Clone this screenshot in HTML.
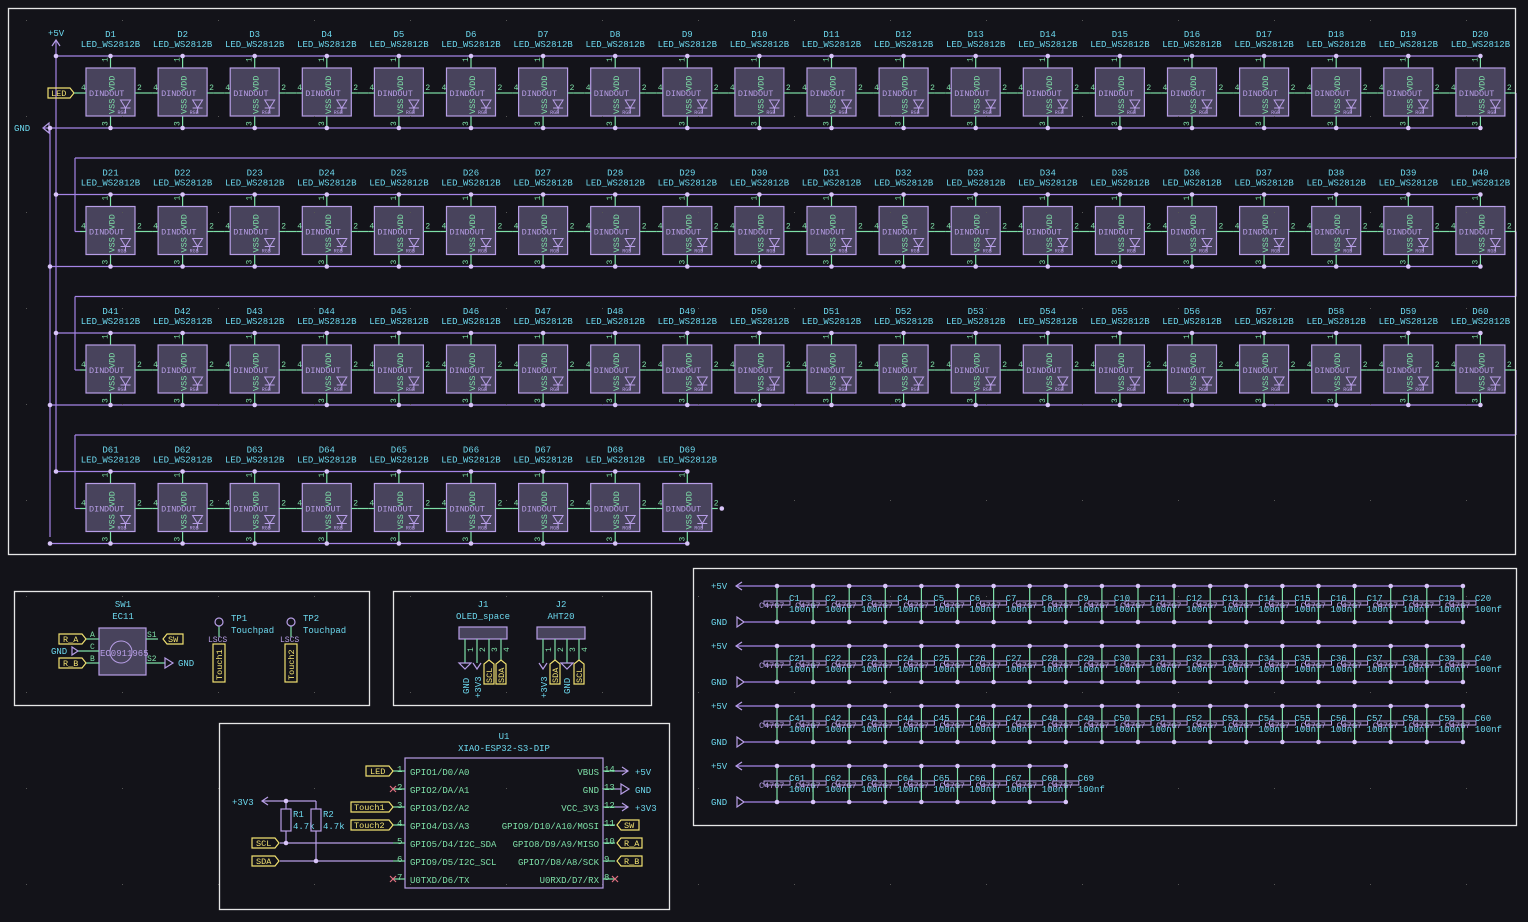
<!DOCTYPE html>
<html><head><meta charset="utf-8">
<style>
html,body{margin:0;padding:0;background:#131319;}
svg{display:block;}
text{font-family:"Liberation Mono",monospace;}
</style></head>
<body>
<svg id="s" width="1528" height="922" viewBox="0 0 1528 922" xmlns="http://www.w3.org/2000/svg">
<rect width="1528" height="922" fill="#131319"/>
<g id="g"></g>
<g fill="none" stroke="#e6e6e6" stroke-width="1.3">
<rect x="8.5" y="8.5" width="1507" height="546"/>
<rect x="14.5" y="591.5" width="355" height="114"/>
<rect x="393.5" y="591.5" width="258" height="114"/>
<rect x="219.5" y="723.5" width="450" height="186"/>
<rect x="693.5" y="568.5" width="823" height="257"/>
</g>
<!-- SW1 section -->
<g font-size="9" fill="#6cd8ee">
<text x="123" y="607" text-anchor="middle">SW1</text>
<text x="123" y="619" text-anchor="middle">EC11</text>
<text x="51" y="654">GND</text>
<text x="178" y="666">GND</text>
<text x="231" y="621">TP1</text>
<text x="231" y="633">Touchpad</text>
<text x="303" y="621">TP2</text>
<text x="303" y="633">Touchpad</text>
</g>
<rect x="99" y="628" width="47" height="47" fill="#48435c" stroke="#b79ee6" stroke-width="1.2"/>
<circle cx="121" cy="652" r="11" fill="none" stroke="#b79ee6"/>
<text x="100" y="656" font-size="9" fill="#b79ee6">EC0911965</text>
<g stroke="#7ee0a8" stroke-width="1.2">
<line x1="86" y1="639" x2="99" y2="639"/><line x1="78" y1="651" x2="99" y2="651"/><line x1="86" y1="663" x2="99" y2="663"/>
<line x1="146" y1="639" x2="158" y2="639"/><line x1="146" y1="663" x2="165" y2="663"/>
<line x1="219" y1="626" x2="219" y2="637"/><line x1="291" y1="626" x2="291" y2="637"/>
</g>
<g font-size="8" fill="#7ee0a8"><text x="90" y="637">A</text><text x="90" y="649">C</text><text x="90" y="661">B</text><text x="147" y="637">S1</text><text x="147" y="661">S2</text></g>
<g fill="none" stroke="#b79ee6" stroke-width="1.2">
<path d="M78 651 l-6 -4 v8 z"/><path d="M165 658 l8 5 -8 5 z"/>
<circle cx="219" cy="622" r="4"/><circle cx="291" cy="622" r="4"/>
</g>
<g font-size="8" fill="#b79ee6"><text x="208" y="642">LSCS</text><text x="280" y="642">LSCS</text></g>
<g fill="none" stroke="#f0e070" stroke-width="1.2">
<path d="M59 634 h23 l4 5 -4 5 h-23 z"/><path d="M59 658 h23 l4 5 -4 5 h-23 z"/>
<path d="M163 639 l4 -5 h16 v10 h-16 z"/>
<rect x="213" y="644" width="12" height="38"/><rect x="285" y="644" width="12" height="38"/>
</g>
<g font-size="8.5" fill="#f0e070">
<text x="63" y="642">R_A</text><text x="63" y="666">R_B</text><text x="168" y="642">SW</text>
<text transform="translate(222,680) rotate(-90)">Touch1</text><text transform="translate(294,680) rotate(-90)">Touch2</text>
</g>
<!-- J1/J2 -->
<g font-size="9" fill="#6cd8ee">
<text x="483" y="607" text-anchor="middle">J1</text><text x="483" y="619" text-anchor="middle">OLED_space</text>
<text x="561" y="607" text-anchor="middle">J2</text><text x="561" y="619" text-anchor="middle">AHT20</text>
<text transform="translate(469,694) rotate(-90)">GND</text><text transform="translate(481,698) rotate(-90)">+3V3</text>
<text transform="translate(547,698) rotate(-90)">+3V3</text><text transform="translate(570,694) rotate(-90)">GND</text>
</g>
<rect x="459" y="627" width="48" height="12" fill="#48435c" stroke="#b79ee6" stroke-width="1.2"/>
<rect x="537" y="627" width="48" height="12" fill="#48435c" stroke="#b79ee6" stroke-width="1.2"/>
<g stroke="#7ee0a8" stroke-width="1.2">
<line x1="465" y1="639" x2="465" y2="663"/><line x1="477" y1="639" x2="477" y2="663"/><line x1="489" y1="639" x2="489" y2="660"/><line x1="501" y1="639" x2="501" y2="660"/>
<line x1="543" y1="639" x2="543" y2="663"/><line x1="555" y1="639" x2="555" y2="660"/><line x1="567" y1="639" x2="567" y2="663"/><line x1="579" y1="639" x2="579" y2="660"/>
</g>
<g font-size="8" fill="#7ee0a8">
<text transform="translate(473,652) rotate(-90)">1</text><text transform="translate(485,652) rotate(-90)">2</text><text transform="translate(497,652) rotate(-90)">3</text><text transform="translate(509,652) rotate(-90)">4</text>
<text transform="translate(551,652) rotate(-90)">1</text><text transform="translate(563,652) rotate(-90)">2</text><text transform="translate(575,652) rotate(-90)">3</text><text transform="translate(587,652) rotate(-90)">4</text>
</g>
<g fill="none" stroke="#b79ee6" stroke-width="1.2">
<path d="M459 663 h12 l-6 6 z"/><path d="M561 663 h12 l-6 6 z"/>
<path d="M473 663 l4 6 4 -6"/><path d="M539 663 l4 6 4 -6"/>
</g>
<g fill="none" stroke="#f0e070" stroke-width="1.2">
<path d="M484 684 v-20 l5 -4 5 4 v20 z"/><path d="M496 684 v-20 l5 -4 5 4 v20 z"/>
<path d="M550 684 v-20 l5 -4 5 4 v20 z"/><path d="M574 684 v-20 l5 -4 5 4 v20 z"/>
</g>
<g font-size="8.5" fill="#f0e070">
<text transform="translate(492,683) rotate(-90)">SCL</text><text transform="translate(504,683) rotate(-90)">SDA</text>
<text transform="translate(558,683) rotate(-90)">SDA</text><text transform="translate(582,683) rotate(-90)">SCL</text>
</g>
<!-- U1 -->
<g font-size="9" fill="#6cd8ee">
<text x="504" y="739" text-anchor="middle">U1</text><text x="504" y="751" text-anchor="middle">XIAO-ESP32-S3-DIP</text>
<text x="232" y="805">+3V3</text>
<text x="635" y="775">+5V</text><text x="635" y="793">GND</text><text x="635" y="811">+3V3</text>
<text x="293" y="817">R1</text><text x="293" y="829">4.7k</text><text x="323" y="817">R2</text><text x="323" y="829">4.7k</text>
</g>
<rect x="405" y="758" width="198" height="130" fill="none" stroke="#b79ee6" stroke-width="1.2"/>
<g font-size="9" fill="#7ee0a8">
<text x="410" y="775">GPIO1/D0/A0</text><text x="410" y="793">GPIO2/DA/A1</text><text x="410" y="811">GPIO3/D2/A2</text><text x="410" y="829">GPIO4/D3/A3</text><text x="410" y="847">GPIO5/D4/I2C_SDA</text><text x="410" y="865">GPIO9/D5/I2C_SCL</text><text x="410" y="883">U0TXD/D6/TX</text>
<g text-anchor="end"><text x="599" y="775">VBUS</text><text x="599" y="793">GND</text><text x="599" y="811">VCC_3V3</text><text x="599" y="829">GPIO9/D10/A10/MOSI</text><text x="599" y="847">GPIO8/D9/A9/MISO</text><text x="599" y="865">GPIO7/D8/A8/SCK</text><text x="599" y="883">U0RXD/D7/RX</text></g>
<text x="397" y="772">1</text><text x="397" y="790">2</text><text x="397" y="808">3</text><text x="397" y="826">4</text><text x="397" y="844">5</text><text x="397" y="862">6</text><text x="397" y="880">7</text>
<text x="604" y="772">14</text><text x="604" y="790">13</text><text x="604" y="808">12</text><text x="604" y="826">11</text><text x="604" y="844">10</text><text x="604" y="862">9</text><text x="604" y="880">8</text>
</g>
<g stroke="#7ee0a8" stroke-width="1.2">
<line x1="393" y1="771" x2="405" y2="771"/><line x1="393" y1="789" x2="405" y2="789"/><line x1="393" y1="807" x2="405" y2="807"/><line x1="393" y1="825" x2="405" y2="825"/><line x1="393" y1="843" x2="405" y2="843"/><line x1="393" y1="861" x2="405" y2="861"/><line x1="393" y1="879" x2="405" y2="879"/>
<line x1="603" y1="771" x2="615" y2="771"/><line x1="603" y1="789" x2="615" y2="789"/><line x1="603" y1="807" x2="615" y2="807"/><line x1="603" y1="825" x2="615" y2="825"/><line x1="603" y1="843" x2="615" y2="843"/><line x1="603" y1="861" x2="615" y2="861"/><line x1="603" y1="879" x2="615" y2="879"/>
</g>
<g stroke="#b79ee6" stroke-width="1.2" fill="none">
<line x1="615" y1="771" x2="628" y2="771"/><path d="M622 767 l6 4 -6 4"/>
<line x1="615" y1="789" x2="621" y2="789"/><path d="M621 784 l8 5 -8 5 z"/>
<line x1="615" y1="807" x2="628" y2="807"/><path d="M622 803 l6 4 -6 4"/>
<line x1="262" y1="801" x2="316" y2="801"/><path d="M268 797 l-6 4 6 4"/>
<line x1="286" y1="801" x2="286" y2="809"/><line x1="316" y1="801" x2="316" y2="809"/>
<rect x="281" y="809" width="10" height="22"/><rect x="311" y="809" width="10" height="22"/>
<line x1="286" y1="831" x2="286" y2="843"/><line x1="316" y1="831" x2="316" y2="861"/>
<line x1="280" y1="843" x2="393" y2="843"/><line x1="280" y1="861" x2="393" y2="861"/>
</g>
<g fill="#d8c4f8"><circle cx="286" cy="801" r="2.3"/><circle cx="286" cy="843" r="2.3"/><circle cx="316" cy="861" r="2.3"/></g>
<g stroke="#e07080" stroke-width="1.2"><path d="M390 786 l6 6 M396 786 l-6 6 M390 876 l6 6 M396 876 l-6 6 M612 876 l6 6 M618 876 l-6 6"/></g>
<g fill="none" stroke="#f0e070" stroke-width="1.2">
<path d="M366 766 h23 l4 5 -4 5 h-23 z"/><path d="M351 802 h38 l4 5 -4 5 h-38 z"/><path d="M351 820 h38 l4 5 -4 5 h-38 z"/>
<path d="M252 838 h23 l4 5 -4 5 h-23 z"/><path d="M252 856 h23 l4 5 -4 5 h-23 z"/>
<path d="M617 825 l4 -5 h18 v10 h-18 z"/><path d="M617 843 l4 -5 h21 v10 h-21 z"/><path d="M617 861 l4 -5 h21 v10 h-21 z"/>
</g>
<g font-size="8.5" fill="#f0e070">
<text x="370" y="774">LED</text><text x="354" y="810">Touch1</text><text x="354" y="828">Touch2</text>
<text x="256" y="846">SCL</text><text x="256" y="864">SDA</text>
<text x="624" y="828">SW</text><text x="624" y="846">R_A</text><text x="624" y="864">R_B</text>
</g>
</svg>
<script>
(function(){
var W='#a584e6',P='#7ee0a8',C='#6cd8ee',B='#b79ee6',Y='#f0e070',J='#d8c4f8';
var s='';
function L(a,b,c,d,col,w){s+='<line x1="'+a+'" y1="'+b+'" x2="'+c+'" y2="'+d+'" stroke="'+col+'" stroke-width="'+(w||1.2)+'"/>';}
function T(x,y,t,col,fs,anc,rot){s+='<text x="'+x+'" y="'+y+'" fill="'+col+'" font-size="'+(fs||9)+'"'+(anc?' text-anchor="'+anc+'"':'')+(rot?' transform="rotate(-90 '+x+' '+y+')"':'')+'>'+t+'</text>';}
function D(x,y){s+='<circle cx="'+x+'" cy="'+y+'" r="2.3" fill="'+J+'"/>';}
var counts=[20,20,20,9],num=1;
// verticals
L(56,40,56,471,W);L(50,128,50,537,W);
s+='<path d="M52 46 l4 -6 4 6" fill="none" stroke="'+B+'" stroke-width="1.2"/>';
T(48,36,'+5V',C,9);
s+='<path d="M43 128 l6 -5 v10 z" fill="none" stroke="'+B+'" stroke-width="1.2"/>';
T(14,131,'GND',C,9);
L(43,128,50,128,W);
s+='<path d="M48 88 h22 l4 5 -4 5 h-22 z" fill="none" stroke="'+Y+'" stroke-width="1.2"/>';
T(51,96,'LED',Y,8.5);
L(74,93,80,93,P);
for(var k=0;k<4;k++){
 var by=68+138.5*k,n=counts[k];
 var lastcx=86+72.1*(n-1)+24.5;
 L(56,by-12,lastcx,by-12,W);L(50,by+60,lastcx,by+60,W);
 D(56,by-12);D(50,by+60);
 for(var i=0;i<n;i++){
  var bx=86+72.1*i,cx=bx+24.5,dy=by+25;
  T(cx,by-31,'D'+num,C,9,'middle');T(cx,by-21,'LED_WS2812B',C,9,'middle');num++;
  L(cx,by-12,cx,by,P);L(cx,by+48,cx,by+60,P);D(cx,by-12);D(cx,by+60);
  T(cx-3,by-6,'1',P,8,null,true);T(cx-3,by+58,'3',P,8,null,true);
  s+='<rect x="'+bx+'" y="'+by+'" width="49" height="48" fill="#48435c" stroke="'+B+'" stroke-width="1.2"/>';
  T(cx+4,by+23,'VDD',P,8.5,null,true);T(cx+4,by+46,'VSS',P,8.5,null,true);
  T(bx+3,dy+3,'DIN',B,8.5);T(bx+18,dy+3,'DOUT',B,8.5);
  s+='<path d="M'+(cx+10)+' '+(by+32)+' h10 l-5 8 z M'+(cx+10)+' '+(by+40)+' h10 M'+(cx+15)+' '+(by+40)+' v5" fill="none" stroke="'+B+'"/>';
  T(cx+7,by+46,'RGB',B,5);
  L(bx-6,dy,bx,dy,P);L(bx+49,dy,bx+55,dy,P);
  T(bx-5,dy-3,'4',P,8);T(bx+51,dy-3,'2',P,8);
  if(i<n-1)L(bx+55,dy,bx+66,dy,P);
 }
 var dyl=by+25;
 if(k<3){
  var ny=by+138.5+25,my=by+90;
  L(1510,dyl,1516,dyl,P);L(1516,dyl,1516,my,W);L(75,my,1516,my,W);L(75,my,75,ny,W);L(75,ny,80,ny,W);
 } else { var ex=86+72.1*(n-1)+55; D(ex+4,dyl);}
}
// capacitor section
for(var r=0;r<4;r++){
 var y5=586+60*r,yg=622+60*r,m=(r<3)?20:9;
 var lx=777+36.1*(m-1);
 T(711,y5+3,'+5V',C,9);T(711,yg+3,'GND',C,9);
 s+='<path d="M742 '+(y5-4)+' l-6 4 6 4" fill="none" stroke="'+B+'" stroke-width="1.2"/>';
 s+='<path d="M744 '+yg+' l-7 -5 v10 z" fill="none" stroke="'+B+'" stroke-width="1.2"/>';
 L(737,y5,lx,y5,W);L(744,yg,lx,yg,W);
 for(var i=0;i<m;i++){
  var x=777+36.1*i,cn=r*20+i+1;
  L(x,y5,x,yg,P);D(x,y5);D(x,yg);
  s+='<rect x="'+(x-13)+'" y="'+(y5+15)+'" width="26" height="4" fill="none" stroke="'+B+'"/>';
  T(x-18,y5+22,'C4767',B,8.5);
  T(x+12,y5+15,'C'+cn,C,9);T(x+12,y5+26,(i==m-1?'100nf':'100nf'),C,9);
 }
}
// grid dots
for(var gx=26;gx<1528;gx+=96)for(var gy=20;gy<922;gy+=96){s+='<rect x="'+gx+'" y="'+gy+'" width="1" height="1" fill="#555"/>';}
document.getElementById('g').innerHTML=s;
})();
</script>
</body></html>
